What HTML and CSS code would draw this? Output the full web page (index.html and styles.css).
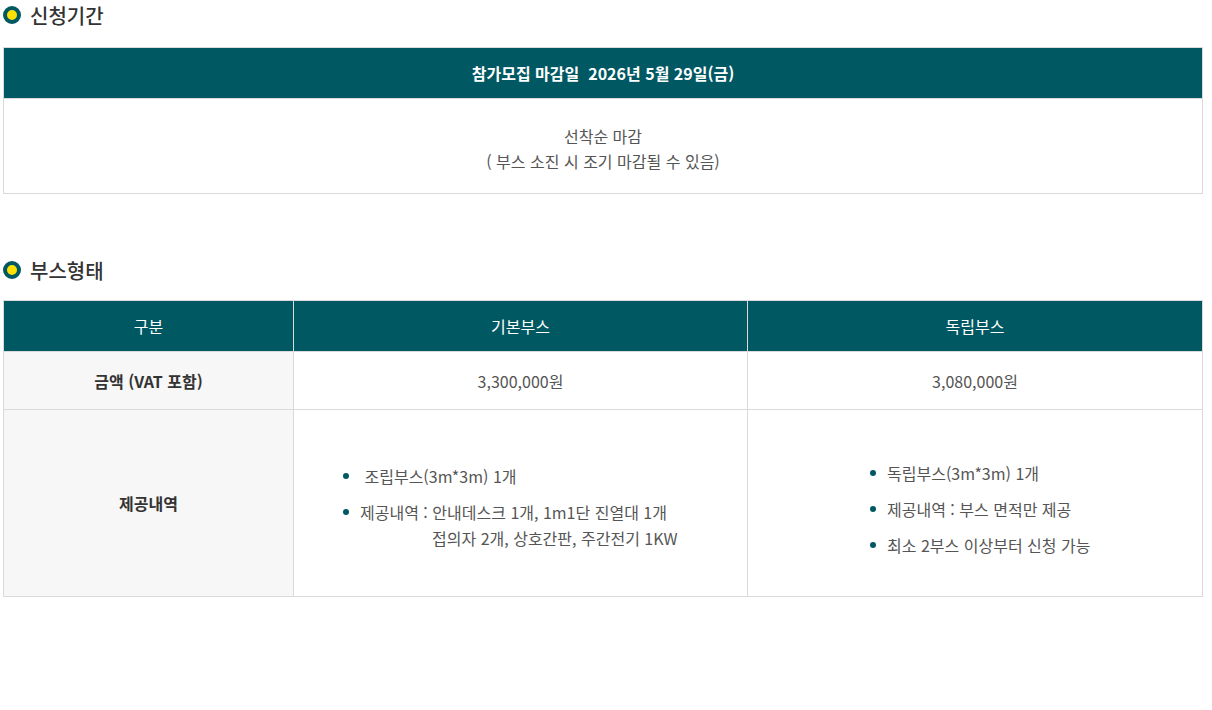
FILE: index.html
```html
<!DOCTYPE html>
<html lang="ko">
<head>
	<meta charset="UTF-8">
	<title>부스 신청 안내</title>
	<link rel="stylesheet" href="styles.css">
</head>
<body>
	<div class="wrap">
		<h3 class="tit tit-first"><span class="dot"></span>신청기간</h3>
		<table class="tbl tbl-period">
			<tr>
				<th>참가모집 마감일&nbsp; 2026년 5월 29일(금)</th>
			</tr>
			<tr>
				<td>선착순 마감<br>( 부스 소진 시 조기 마감될 수 있음)</td>
			</tr>
		</table>

		<h3 class="tit tit-second"><span class="dot"></span>부스형태</h3>
		<table class="tbl tbl-booth">
			<colgroup>
				<col class="c1">
				<col class="c2">
				<col class="c3">
			</colgroup>
			<tr>
				<th>구분</th>
				<th>기본부스</th>
				<th>독립부스</th>
			</tr>
			<tr class="row-price">
				<td class="label">금액 (VAT 포함)</td>
				<td>3,300,000원</td>
				<td>3,080,000원</td>
			</tr>
			<tr class="row-detail">
				<td class="label">제공내역</td>
				<td class="list-cell">
					<ul class="bul bul-basic">
						<li>&nbsp;조립부스(3m*3m) 1개</li>
						<li>제공내역 : 안내데스크 1개, 1m1단 진열대 1개<span class="cont">접의자 2개, 상호간판, 주간전기 1KW</span></li>
					</ul>
				</td>
				<td class="list-cell">
					<ul class="bul bul-free">
						<li>독립부스(3m*3m) 1개</li>
						<li>제공내역 : 부스 면적만 제공</li>
						<li>최소 2부스 이상부터 신청 가능</li>
					</ul>
				</td>
			</tr>
		</table>
	</div>
</body>
</html>
```

FILE: styles.css
```css
body{margin:0;background:#fff;font-family:"Noto Sans CJK KR","Noto Sans",sans-serif;color:#555;}
.wrap{width:1200px;padding:0 3px;}

.tit{display:flex;align-items:center;height:30px;margin:0;font-size:20px;font-weight:500;color:#333;}
.tit-first{margin-bottom:17px;}
.tit-second{margin-top:61px;margin-bottom:15px;}
.dot{width:10px;height:10px;border:4px solid #005863;border-radius:50%;background:#ffe100;margin:0 9px 0 0;}

.tbl{width:1200px;border-collapse:collapse;table-layout:fixed;font-size:16px;}
.tbl th,.tbl td{border:1px solid #dadada;text-align:center;padding:0;}
.tbl th{background:#005863;color:#fff;height:50px;font-weight:400;}

.tbl-period th{font-weight:700;}
.tbl-period td{height:88px;padding-top:6px;line-height:25px;color:#555;}

.c1{width:290px;}
.c2{width:454px;}
.row-price td{height:57px;}
.tbl-booth .label{background:#f7f7f7;font-weight:700;color:#333;}
.row-detail td{height:186px;}

.list-cell{text-align:left !important;}
.bul{list-style:none;margin:0;padding:0;}
.bul li{position:relative;line-height:26px;margin-top:10px;padding-left:17px;}
.bul li:first-child{margin-top:0;}
.bul li:before{content:"";position:absolute;left:0;top:10px;width:6px;height:6px;border-radius:50%;background:#005863;}
.bul .cont{display:block;padding-left:72px;margin-top:0;}
.bul-basic{margin-left:49px;padding-top:8px;}
.bul-free{margin-left:122px;padding-top:12px;}
```
